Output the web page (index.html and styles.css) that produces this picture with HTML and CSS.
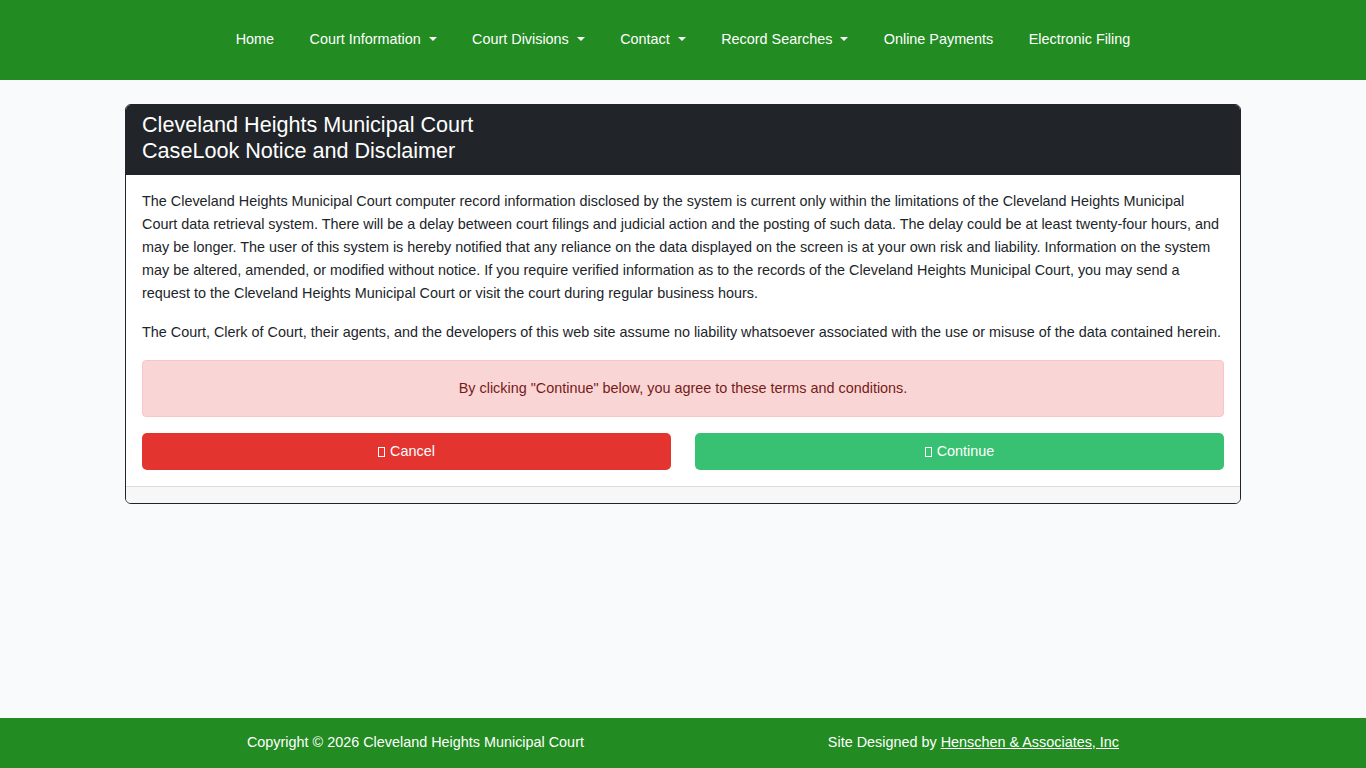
FILE: index.html
```html
<!DOCTYPE html>
<html lang="en">
<head>
    <meta charset="UTF-8">
    <meta name="viewport" content="width=device-width, initial-scale=1.0">
    <title>CaseLook Notice and Disclaimer</title>
    <link rel="stylesheet" href="styles.css">
</head>
<body>
    <nav class="navbar">
        <ul class="nav-list">
            <li><a href="#">Home</a></li>
            <li><a href="#" class="dropdown-toggle">Court Information</a></li>
            <li><a href="#" class="dropdown-toggle">Court Divisions</a></li>
            <li><a href="#" class="dropdown-toggle">Contact</a></li>
            <li><a href="#" class="dropdown-toggle">Record Searches</a></li>
            <li><a href="#">Online Payments</a></li>
            <li><a href="#">Electronic Filing</a></li>
        </ul>
    </nav>

    <main class="container">
        <div class="card">
            <div class="card-header">
                <h1>Cleveland Heights Municipal Court<br>CaseLook Notice and Disclaimer</h1>
            </div>
            <div class="card-body">
                <p>The Cleveland Heights Municipal Court computer record information disclosed by the system is current only within the limitations of the Cleveland Heights Municipal Court data retrieval system. There will be a delay between court filings and judicial action and the posting of such data. The delay could be at least twenty-four hours, and may be longer. The user of this system is hereby notified that any reliance on the data displayed on the screen is at your own risk and liability. Information on the system may be altered, amended, or modified without notice. If you require verified information as to the records of the Cleveland Heights Municipal Court, you may send a request to the Cleveland Heights Municipal Court or visit the court during regular business hours.</p>
                <p>The Court, Clerk of Court, their agents, and the developers of this web site assume no liability whatsoever associated with the use or misuse of the data contained herein.</p>
                <div class="alert">By clicking "Continue" below, you agree to these terms and conditions.</div>
                <div class="actions">
                    <button class="btn btn-cancel"><span class="icon"></span>Cancel</button>
                    <button class="btn btn-continue"><span class="icon"></span>Continue</button>
                </div>
            </div>
            <div class="card-footer"></div>
        </div>
    </main>

    <footer class="footer">
        <div class="footer-inner">
            <span>Copyright &copy; 2026 Cleveland Heights Municipal Court</span>
            <span>Site Designed by <a href="#">Henschen &amp; Associates, Inc</a></span>
        </div>
    </footer>
</body>
</html>
```

FILE: styles.css
```css
* {
    box-sizing: border-box;
    margin: 0;
    padding: 0;
}

body {
    font-family: "Liberation Sans", Arial, sans-serif;
    font-size: 14.4px;
    color: #212529;
    background-color: #f8fafc;
    min-height: 100vh;
    display: flex;
    flex-direction: column;
}

a {
    color: inherit;
    text-decoration: none;
}

.navbar {
    background-color: #228b22;
    height: 80px;
    display: flex;
    justify-content: center;
    align-items: center;
}

.nav-list {
    list-style: none;
    display: flex;
    padding-bottom: 2px;
}

.nav-list a {
    display: block;
    color: #fff;
    font-size: 14.4px;
    padding: 0 17.7px;
}

.dropdown-toggle::after {
    content: "";
    display: inline-block;
    margin-left: 8px;
    vertical-align: 3px;
    border-top: 4px solid;
    border-left: 4px solid transparent;
    border-right: 4px solid transparent;
}

.container {
    width: 1116px;
    margin: 24px auto 0;
    flex: 1;
}

.card {
    background-color: #fff;
    border: 1px solid #212529;
    border-radius: 6px;
    overflow: hidden;
}

.card-header {
    background-color: #212529;
    color: #fff;
    padding: 7px 16px 11px;
}

.card-header h1 {
    font-size: 21.6px;
    font-weight: 400;
    line-height: 26px;
}

.card-body {
    padding: 15px 16px 16px;
}

.card-body p {
    line-height: 23px;
    margin-bottom: 16px;
    margin-right: 2px;
}

.alert {
    background-color: #f9d6d5;
    border: 1px solid #f7c6c5;
    color: #761b18;
    border-radius: 4px;
    padding: 16px;
    line-height: 23px;
    text-align: center;
    margin-bottom: 16px;
}

.actions {
    display: grid;
    grid-template-columns: 1fr 1fr;
    gap: 24px;
}

.btn {
    font-family: inherit;
    font-size: 14.4px;
    line-height: 23px;
    color: #fff;
    border: 1px solid transparent;
    border-radius: 5px;
    padding: 6px 12px;
    cursor: pointer;
}

.btn-cancel {
    background-color: #e3342f;
}

.btn-continue {
    background-color: #38c172;
}

.icon {
    display: inline-block;
    width: 7px;
    height: 10px;
    border: 1px solid #fff;
    margin-right: 5px;
    vertical-align: -1px;
}

.card-footer {
    background-color: #f7f7f7;
    border-top: 1px solid #dcdcdc;
    height: 17px;
}

.footer {
    background-color: #228b22;
    color: #fff;
    height: 50px;
    margin-top: 214px;
    display: flex;
    align-items: center;
    padding-bottom: 2px;
}

.footer-inner {
    width: 1116px;
    margin: 0 auto;
    display: flex;
    justify-content: space-around;
}

.footer-inner a {
    text-decoration: underline;
}
```
